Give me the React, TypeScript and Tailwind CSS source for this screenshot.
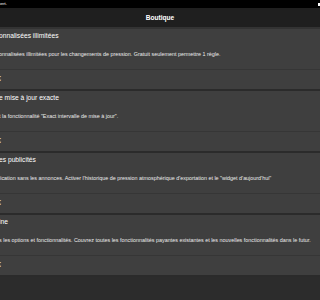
import React from "react";

const items = [
  {
    title: "onnalisées illimitées",
    desc: "onnalisées illimitées pour les changements de pression. Gratuit seulement permettre 1 règle.",
  },
  {
    title: "e mise à jour exacte",
    desc: "t la fonctionnalité \"Exact intervalle de mise à jour\".",
  },
  {
    title: "es publicités",
    desc: "lication sans les annonces. Activer l'historique de pression atmosphérique d'exportation et le \"widget d'aujourd'hui\"",
  },
  {
    title: "ine",
    desc: "s les options et fonctionnalités. Couvrez toutes les fonctionnalités payantes existantes et les nouvelles fonctionnalités dans le futur.",
  },
];

export default function App() {
  return (
    <div
      className="w-[320px] h-[300px] overflow-hidden bg-[#2c2c2c] flex flex-col text-white"
      style={{ fontFamily: '"Liberation Sans", Arial, sans-serif' }}
    >
      <div className="h-[8px] bg-black flex items-center justify-between shrink-0">
        <span className="text-[4px] leading-[4px] text-white -ml-[1px]">vert.</span>
        <span className="w-[2px] h-[3px] bg-white" />
      </div>
      <div className="h-[19px] bg-[#1f1f1f] flex items-center justify-center shrink-0">
        <span className="text-[6.6px] font-bold">Boutique</span>
      </div>
      <div className="h-[2px] bg-[#333333] shrink-0" />
      {items.map((it, i) => (
        <div key={i} className="shrink-0 flex flex-col">
          <div className="h-[60px] bg-[#3f3f3f] flex flex-col overflow-hidden">
            <div className="h-[40px] flex flex-col">
              <div className="h-[14px] flex items-center whitespace-nowrap text-[6.7px] -ml-[1px]">
                {it.title}
              </div>
              <div className="h-[22px] flex items-center whitespace-nowrap text-[5.4px] text-[#ececec] -ml-[1px]">
                {it.desc}
              </div>
            </div>
            <div className="h-[1px] bg-[#363636]" />
            <div className="h-[19px] flex items-center whitespace-nowrap text-[7px] -ml-[3px]">
              €
            </div>
          </div>
          <div className="h-[2px] bg-[#2b2b2b]" />
        </div>
      ))}
    </div>
  );
}
